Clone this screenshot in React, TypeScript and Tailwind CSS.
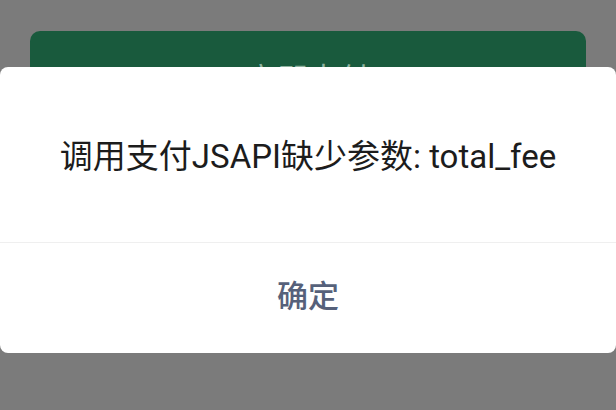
import React from "react";

export default function App() {
  return (
    <div
      className="relative w-[616px] h-[410px] overflow-hidden bg-[#7b7b7b]"
      style={{ fontFamily: 'Roboto, "Noto Sans CJK SC", sans-serif' }}
    >
      <div className="pt-[31px] px-[30px]">
        <div className="h-[98px] rounded-[10px] bg-[#195a3d] flex items-center justify-center text-[31px] text-[#8fb3a0]">
          立即支付
        </div>
      </div>
      <div className="absolute left-0 right-0 top-[67px] h-[286px] rounded-[8px] bg-white flex flex-col">
        <div className="h-[175px] flex items-center justify-center text-[33px] text-[#1c1c1c] pt-[4px]">
          调用支付JSAPI缺少参数: total_fee
        </div>
        <div className="h-px bg-[#efefef]" />
        <div className="flex-1 flex items-center justify-center text-[31px] font-medium text-[#56617a] pb-[2px]">
          确定
        </div>
      </div>
    </div>
  );
}
